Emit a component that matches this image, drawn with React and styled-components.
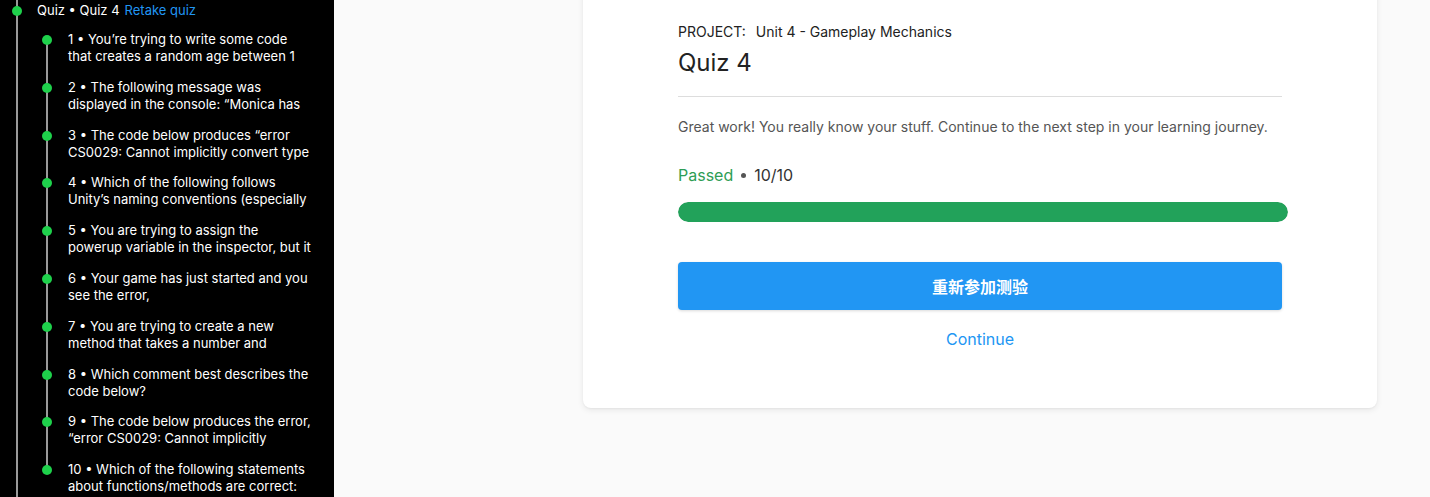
import React from "react";
import styled, { createGlobalStyle } from "styled-components";

const Global = createGlobalStyle`
  html, body { margin: 0; padding: 0; }
  body {
    font-family: Inter, "Noto Sans", "Noto Sans CJK SC", sans-serif;
    background: #fafafa;
    overflow: hidden;
  }
`;

const Page = styled.div`
  display: flex;
  width: 1430px;
  height: 497px;
  overflow: hidden;
`;

const Sidebar = styled.aside`
  position: relative;
  flex: 0 0 334px;
  background: #000;
  color: #fff;
  overflow: hidden;
  &::before {
    content: "";
    position: absolute;
    left: 16px;
    top: 0;
    bottom: 0;
    width: 2px;
    background: #9a9a9a;
  }
`;

const SectionHead = styled.div`
  position: relative;
  padding: 2px 0 0 37px;
  font-size: 13px;
  line-height: 17px;
  white-space: nowrap;
  &::before {
    content: "";
    position: absolute;
    left: 12px;
    top: 6px;
    width: 10px;
    height: 10px;
    border-radius: 50%;
    background: #1ed14b;
  }
`;

const Retake = styled.span`
  color: #2196f3;
  margin-left: 5px;
`;

const ItemList = styled.ul`
  list-style: none;
  margin: 12px 0 0;
  padding: 0;
  display: flex;
  flex-direction: column;
  gap: 13.8px;
`;

const Item = styled.li`
  position: relative;
  padding-left: 68px;
  font-size: 13px;
  line-height: 17px;
  white-space: nowrap;
  &::before {
    content: "";
    position: absolute;
    left: 46px;
    top: 8px;
    width: 2px;
    height: 48px;
    background: #9a9a9a;
  }
  &:last-child::before { display: none; }
  &::after {
    content: "";
    position: absolute;
    left: 42px;
    top: 4px;
    width: 10px;
    height: 10px;
    border-radius: 50%;
    background: #1ed14b;
  }
`;

const Line = styled.div``;

const Main = styled.main`
  flex: 1;
  background: #fafafa;
  padding-left: 249px;
`;

const Card = styled.section`
  width: 794px;
  box-sizing: border-box;
  margin-top: -11px;
  background: #fff;
  border-radius: 8px;
  box-shadow: 0 2px 6px rgba(0, 0, 0, 0.08), 0 1px 2px rgba(0, 0, 0, 0.04);
  padding: 33px 95px 57px;
  display: flex;
  flex-direction: column;
`;

const Project = styled.div`
  font-size: 14px;
  line-height: 20px;
  color: #222;
`;

const ProjectLabel = styled.span`
  margin-right: 10px;
`;

const Title = styled.h1`
  margin: 5px 0 0;
  font-size: 24px;
  line-height: 32px;
  font-weight: 400;
  color: #222;
`;

const Divider = styled.hr`
  border: 0;
  height: 1px;
  background: #dddddd;
  margin: 17px 0 0;
  width: 604px;
`;

const Message = styled.p`
  margin: 20px 0 0;
  font-size: 14px;
  line-height: 20px;
  color: #555;
`;

const Score = styled.div`
  margin-top: 26px;
  font-size: 16px;
  line-height: 24px;
  color: #333;
  display: flex;
  align-items: center;
  gap: 8px;
`;

const Passed = styled.span`
  color: #2e9d55;
`;

const Dot = styled.span`
  width: 5px;
  height: 5px;
  border-radius: 50%;
  background: #555;
`;

const Track = styled.div`
  margin-top: 15px;
  width: 610px;
  height: 20px;
  border-radius: 10px;
  background: #e6e6e6;
  overflow: hidden;
`;

const Fill = styled.div`
  height: 100%;
  background: #22a25a;
  border-radius: 10px;
`;

const Button = styled.button`
  margin-top: 40px;
  width: 604px;
  height: 48px;
  border: 0;
  border-radius: 4px;
  background: #2196f3;
  color: #fff;
  font-family: "Noto Sans CJK SC", Inter, sans-serif;
  font-size: 16px;
  font-weight: 700;
  box-shadow: 0 1px 3px rgba(0, 0, 0, 0.15);
  cursor: pointer;
`;

const ContinueLink = styled.a`
  margin-top: 17px;
  width: 604px;
  text-align: center;
  font-size: 16px;
  line-height: 24px;
  color: #2196f3;
  text-decoration: none;
  font-weight: 400;
`;

const items = [
  ["1 • You’re trying to write some code", "that creates a random age between 1"],
  ["2 • The following message was", "displayed in the console: “Monica has"],
  ["3 • The code below produces “error", "CS0029: Cannot implicitly convert type"],
  ["4 • Which of the following follows", "Unity’s naming conventions (especially"],
  ["5 • You are trying to assign the", "powerup variable in the inspector, but it"],
  ["6 • Your game has just started and you", "see the error,"],
  ["7 • You are trying to create a new", "method that takes a number and"],
  ["8 • Which comment best describes the", "code below?"],
  ["9 • The code below produces the error,", "“error CS0029: Cannot implicitly"],
  ["10 • Which of the following statements", "about functions/methods are correct:"],
];

export default function App() {
  const score = 10;
  const total = 10;
  return (
    <>
      <Global />
      <Page>
        <Sidebar>
          <SectionHead>
            Quiz • Quiz 4<Retake>Retake quiz</Retake>
          </SectionHead>
          <ItemList>
            {items.map(([a, b]) => (
              <Item key={a}>
                <Line>{a}</Line>
                <Line>{b}</Line>
              </Item>
            ))}
          </ItemList>
        </Sidebar>
        <Main>
          <Card>
            <Project>
              <ProjectLabel>PROJECT:</ProjectLabel>Unit 4 - Gameplay Mechanics
            </Project>
            <Title>Quiz 4</Title>
            <Divider />
            <Message>
              Great work! You really know your stuff. Continue to the next step in your learning journey.
            </Message>
            <Score>
              <Passed>Passed</Passed>
              <Dot />
              <span>
                {score}/{total}
              </span>
            </Score>
            <Track>
              <Fill style={{ width: `${(score / total) * 100}%` }} />
            </Track>
            <Button>重新参加测验</Button>
            <ContinueLink href="#">Continue</ContinueLink>
          </Card>
        </Main>
      </Page>
    </>
  );
}
